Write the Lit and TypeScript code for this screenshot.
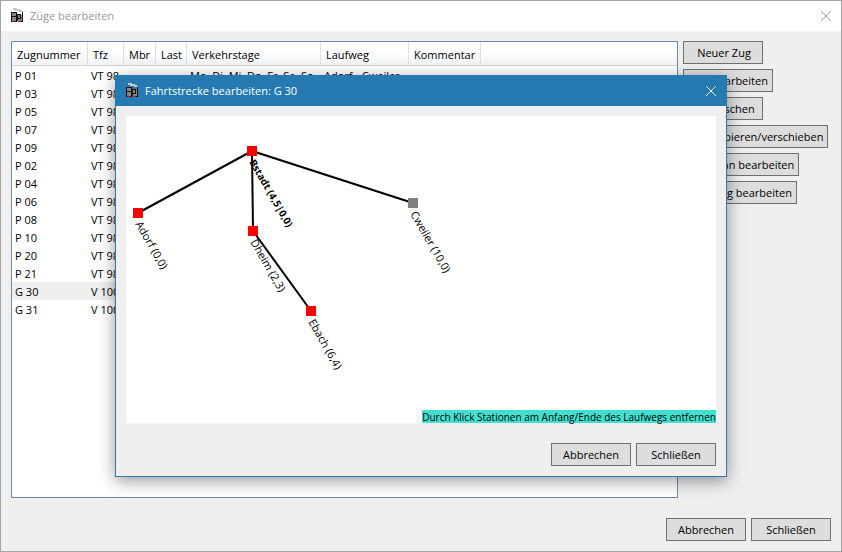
import { LitElement, html, svg, css } from "lit";
import { customElement } from "lit/decorators.js";
import { classMap } from "lit/directives/class-map.js";

interface Train {
  name: string;
  engine: string;
  days?: string;
  route?: string;
  selected?: boolean;
}

interface Station {
  label: string;
  x: number;
  y: number;
  inRoute: boolean;
  bold?: boolean;
}

const DAYS = "Mo, Di, Mi, Do, Fr, Sa, So";
const COLUMNS = ["Zugnummer", "Tfz", "Mbr", "Last", "Verkehrstage", "Laufweg", "Kommentar", ""];

const TRAINS: Train[] = [
  ...["01", "03", "05", "07", "09", "02", "04", "06", "08", "10", "20", "21"].map((n) => ({
    name: `P ${n}`,
    engine: "VT 98",
    days: DAYS,
    route: "Adorf - Cweiler",
  })),
  { name: "G 30", engine: "V 100", days: DAYS, route: "Adorf - Ebach", selected: true },
  { name: "G 31", engine: "V 100", days: DAYS, route: "Ebach - Adorf" },
];

const ACTIONS = [
  "Neuer Zug",
  "Zug bearbeiten",
  "Zug löschen",
  "Zug kopieren/verschieben",
  "Fahrplan bearbeiten",
  "Laufweg bearbeiten",
];

const STATIONS: Station[] = [
  { label: "Adorf (0,0)", x: 12, y: 97, inRoute: true },
  { label: "Bstadt (4,5|0,0)", x: 126, y: 35, inRoute: true, bold: true },
  { label: "Cweiler (10,0)", x: 287, y: 87, inRoute: false },
  { label: "Dheim (2,3)", x: 127, y: 115, inRoute: true },
  { label: "Ebach (6,4)", x: 185, y: 195, inRoute: true },
];

const TRACKS = [[0, 1], [1, 2], [1, 3], [3, 4]];

const shared = css`
  * {
    box-sizing: border-box;
  }
  .icon {
    flex: none;
    width: 16px;
    height: 16px;
  }
  .close {
    display: flex;
    align-items: center;
    justify-content: center;
    width: 30px;
    height: 28px;
    padding: 0;
    border: 0;
    background: none;
    color: inherit;
  }
  .btn {
    min-width: 80px;
    height: 23px;
    padding: 1px 4px 0 6px;
    border: 1px solid #707070;
    background: #dddddd;
    color: #000;
    font: inherit;
    white-space: nowrap;
  }
  .footer .btn {
    padding: 1px 5px 0;
  }
  .footer {
    display: flex;
    justify-content: flex-end;
    gap: 5px;
  }
`;

const appIcon = html`<svg class="icon" viewBox="0 0 16 16" shape-rendering="crispEdges" aria-hidden="true">
  <path d="M4 0h4v1h3v1h2v1h1v1h-4v-1H6v-1H4z" fill="#c8c8c8" />
  <path d="M3 5h4v8H3zM8 7h5v6H8z" fill="#858585" />
  <path d="M2 4h5v1H3v3h4v1H3v4H2zM7 4h1v9H7zM8 6h4v1H9v6H8zM11 7h1v4h-1zM9 10h2v1H9zM13 4h1v9h-1z" fill="#111" />
  <path d="M2 13h1v1H2zM6 13h2v1H6zM12 13h2v1h-2z" fill="#111" />
  <path d="M3 13h3v1H3zM9 13h3v1H9z" fill="#b01818" />
</svg>`;

const closeIcon = html`<svg width="12" height="12" viewBox="0 0 12 12" aria-hidden="true">
  <path d="M1 1l10 10M11 1L1 11" fill="none" stroke="currentColor" />
</svg>`;

@customElement("route-dialog")
export class RouteDialog extends LitElement {
  static styles = [
    shared,
    css`
      :host {
        display: flex;
        flex-direction: column;
        width: 612px;
        height: 402px;
        max-width: 100%;
        border: 1px solid #257bb1;
        background: #efefef;
        box-shadow: 0 4px 16px rgba(0, 0, 0, 0.4);
      }
      .titlebar {
        display: flex;
        align-items: center;
        height: 30px;
        padding: 0 0 0 8px;
        background: #257bb1;
        color: #fff;
      }
      .title {
        flex: 1;
        margin: 0 0 0 5px;
        font-size: 11px;
        font-weight: 400;
      }
      .content {
        flex: 1;
        display: flex;
        flex-direction: column;
        gap: 20px;
        padding: 10px;
      }
      .canvas {
        flex: 1;
        display: grid;
        background: #fff;
      }
      .map,
      .hint {
        grid-area: 1 / 1;
      }
      .map {
        width: 100%;
        height: 100%;
      }
      .track {
        stroke: #000;
        stroke-width: 2;
      }
      .stop {
        fill: #808080;
      }
      .stop.on {
        fill: #f00;
      }
      .name {
        font-size: 11px;
      }
      .name.bold {
        font-size: 10px;
        font-weight: 700;
      }
      .hint {
        place-self: end;
        margin: 0;
        padding-top: 1px;
        background: #40e0d0;
        font-size: 10px;
        line-height: 12px;
        white-space: nowrap;
      }
    `,
  ];

  render() {
    return html`
      <header class="titlebar">
        ${appIcon}
        <h2 class="title">Fahrtstrecke bearbeiten: G 30</h2>
        <button class="close" aria-label="Fenster schließen">${closeIcon}</button>
      </header>
      <div class="content">
        <div class="canvas">
          <svg class="map">
            ${TRACKS.map(([a, b]) => {
              const from = STATIONS[a];
              const to = STATIONS[b];
              return svg`<line class="track" x1=${from.x} y1=${from.y} x2=${to.x} y2=${to.y} />`;
            })}
            ${STATIONS.map(
              (s) => svg`<g transform="translate(${s.x} ${s.y})">
                <rect class=${classMap({ stop: true, on: s.inRoute })} x="-5" y="-5" width="10" height="10" />
                <text class=${classMap({ name: true, bold: !!s.bold })} transform="translate(-3 11) rotate(60)">${s.label}</text>
              </g>`,
            )}
          </svg>
          <p class="hint">Durch Klick Stationen am Anfang/Ende des Laufwegs entfernen</p>
        </div>
        <div class="footer">
          <button class="btn">Abbrechen</button>
          <button class="btn">Schließen</button>
        </div>
      </div>
    `;
  }
}

@customElement("app-root")
export class AppRoot extends LitElement {
  static styles = [
    shared,
    css`
      :host {
        position: relative;
        display: flex;
        flex-direction: column;
        min-height: 100vh;
        box-sizing: border-box;
        border: 1px solid #a5a5a5;
        background: #efefef;
        color: #000;
        font: 11px/16px "Open Sans", "Noto Sans", sans-serif;
      }
      .titlebar {
        display: flex;
        align-items: center;
        height: 30px;
        padding: 0 0 0 8px;
        background: #fff;
        color: #999;
      }
      .title {
        flex: 1;
        margin: 0 0 0 5px;
        font-size: 11px;
        font-weight: 400;
      }
      .body {
        flex: 1;
        display: flex;
        flex-direction: column;
        gap: 20px;
        padding: 10px;
      }
      .main {
        flex: 1;
        display: flex;
        gap: 5px;
      }
      .list {
        flex: 1;
        min-width: 0;
        border: 1px solid #6a8caf;
        background: #fff;
      }
      .trains {
        width: 100%;
        table-layout: fixed;
        border-collapse: separate;
        border-spacing: 0;
      }
      .trains th {
        height: 24px;
        padding: 3px 0 0 5px;
        border-right: 1px solid #dedfe1;
        border-bottom: 1px solid #d5d5d5;
        background: linear-gradient(#fff 40%, #f1f2f4);
        font-weight: 400;
        text-align: left;
        white-space: nowrap;
      }
      .trains th:last-child {
        border-right: 0;
      }
      .trains td {
        height: 18px;
        padding: 2px 0 0 3px;
        white-space: nowrap;
      }
      .selected td {
        background: #efefef;
      }
      .c0 {
        width: 76px;
      }
      .c1 {
        width: 36px;
      }
      .c2 {
        width: 32px;
      }
      .c3 {
        width: 31px;
      }
      .c4 {
        width: 134px;
      }
      .c5 {
        width: 88px;
      }
      .c6 {
        width: 72px;
      }
      .actions {
        display: flex;
        flex-direction: column;
        align-items: flex-start;
        gap: 5px;
        width: 148px;
      }
      .overlay {
        position: absolute;
        inset: 0;
        display: grid;
        place-items: center;
      }
    `,
  ];

  render() {
    return html`
      <header class="titlebar">
        ${appIcon}
        <h1 class="title">Züge bearbeiten</h1>
        <button class="close" aria-label="Fenster schließen">${closeIcon}</button>
      </header>
      <div class="body">
        <div class="main">
          <div class="list">
            <table class="trains">
              <thead>
                <tr>${COLUMNS.map((c, i) => html`<th class="c${i}">${c}</th>`)}</tr>
              </thead>
              <tbody>
                ${TRAINS.map(
                  (t) => html`<tr class=${classMap({ selected: !!t.selected })}>
                    <td>${t.name}</td>
                    <td>${t.engine}</td>
                    <td></td>
                    <td></td>
                    <td>${t.days}</td>
                    <td>${t.route}</td>
                    <td></td>
                    <td></td>
                  </tr>`,
                )}
              </tbody>
            </table>
          </div>
          <div class="actions">${ACTIONS.map((a) => html`<button class="btn">${a}</button>`)}</div>
        </div>
        <div class="footer">
          <button class="btn">Abbrechen</button>
          <button class="btn">Schließen</button>
        </div>
      </div>
      <div class="overlay"><route-dialog></route-dialog></div>
    `;
  }
}
